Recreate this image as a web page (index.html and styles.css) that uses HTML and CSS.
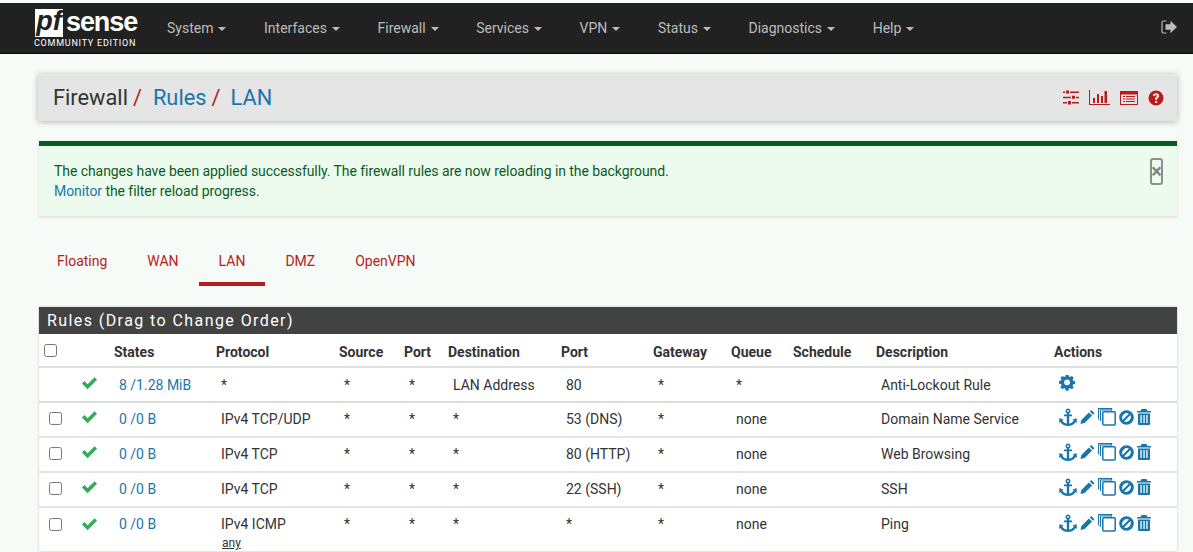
FILE: index.html
```html
<!DOCTYPE html>
<html lang="en">
<head>
<meta charset="utf-8">
<title>Firewall: Rules: LAN</title>
<link rel="stylesheet" href="styles.css">
</head>
<body>
<svg class="defs" width="0" height="0" aria-hidden="true">
  <symbol id="i-check" viewBox="0 0 18 14"><path d="M1 7.500 3.600 5 7 8.300 14.400 1 17 3.600 7 13.500z"/></symbol>
  <symbol id="i-cog" viewBox="0 0 16 16"><path fill-rule="evenodd" d="M6.500 0h3l.4 2.200 1.400.6 1.900-1.300 2.100 2.100-1.300 1.900.6 1.400 2.200.4v3l-2.200.4-.6 1.400 1.300 1.900-2.100 2.100-1.900-1.300-1.400.6-.4 2.200h-3l-.4-2.200-1.400-.6-1.900 1.300L.700 13.700l1.300-1.900-.6-1.400L-.800 10V7l2.200-.4.6-1.400L.700 3.600 2.800 1.500l1.900 1.300 1.400-.6zM8 5.300a3.200 3.200 0 1 0 0 6.400 3.200 3.200 0 0 0 0-6.400z" transform="translate(.7 -.5) scale(.92)"/></symbol>
  <symbol id="i-anchor" viewBox="0 0 18 18"><path fill-rule="evenodd" d="M9 .5a2.500 2.500 0 0 1 1.200 4.700V6.500H13v1.800h-2.800v7.300c2-.3 3.800-1.400 4.600-3l-1.400-.9L17.500 10l.5 5-1.400-.9C15.200 16.600 12.300 18 9 18s-6.200-1.400-7.600-3.900L0 15l.5-5 4.100 1.700-1.400.9c.8 1.600 2.600 2.700 4.600 3V8.300H5V6.500h2.800V5.200A2.500 2.500 0 0 1 9 .5zm0 1.600a.9.900 0 1 0 0 1.800.9.900 0 0 0 0-1.800z"/></symbol>
  <symbol id="i-pencil" viewBox="0 0 16 16"><path d="M12 .6 15.400 4l-1.500 1.500-3.400-3.400zM9.500 3.100l3.400 3.400-8 8L.5 15.500l1-4.400z"/></symbol>
  <symbol id="i-clone" viewBox="0 0 18 18"><path fill="none" stroke="currentColor" stroke-width="1" d="M2.500 13V2h11"/><path fill="none" stroke="currentColor" stroke-width="1.100" d="M.6 11.500V.6h13v2"/><rect x="4.800" y="3.800" width="12.400" height="13.200" rx="1" fill="none" stroke="currentColor" stroke-width="1.500"/></symbol>
  <symbol id="i-ban" viewBox="0 0 16 16"><path fill-rule="evenodd" d="M8 .2a7.800 7.800 0 1 1 0 15.600A7.800 7.800 0 0 1 8 .2zM3.800 10.600 10.600 3.800A5.200 5.200 0 0 0 3.800 10.600zM5.400 12.200a5.200 5.200 0 0 0 6.800-6.800z"/></symbol>
  <symbol id="i-trash" viewBox="0 0 14 16"><path fill-rule="evenodd" d="M4.500 0h5l1 2H14v1.600H0V2h3.500zM1 4.500h12V15a1 1 0 0 1-1 1H2a1 1 0 0 1-1-1zM3.400 6v8h1.300V6zM6.400 6v8h1.300V6zM9.300 6v8h1.300V6z"/></symbol>
  <symbol id="i-sliders" viewBox="0 0 16 15"><path fill-rule="evenodd" d="M0 1.500h2v1.500H0zM3 .5h3v3H3zM7 1.500h9v1.500H7zM0 6.700h8v1.500H0zM9 5.700h3v3H9zM13 6.700h3v1.500h-3zM0 12h4v1.500H0zM5 11h3v3.500H5zM9 12h7v1.500H9z"/></symbol>
  <symbol id="i-chart" viewBox="0 0 21 15"><path d="M0 0h1v14h20v1H0zM4 8h2v5H4zM8 4h2v9H8zM12 6h2v7h-2zM15.500 1h2.500v12h-2.500z"/></symbol>
  <symbol id="i-list" viewBox="0 0 18 14"><path fill-rule="evenodd" d="M0 0h18v14H0zM1 3.500V13h16V3.500zM3 5h2v1H3zM6 5h9v1H6zM3 7.500h2v1H3zM6 7.500h9v1H6zM3 10h2v1H3zM6 10h9v1H6z"/></symbol>
  <symbol id="i-help" viewBox="0 0 16 16"><path fill-rule="evenodd" d="M8 .5a7.500 7.500 0 1 1 0 15 7.500 7.500 0 0 1 0-15zM7 11v2h2.200v-2zM8 3.200c-1.800 0-3 1-3.200 2.600l2 .4c.1-.8.500-1.200 1.100-1.200.6 0 1 .3 1 .8 0 .5-.4.800-1 1.300-.7.500-.9 1.200-.9 2.900h2c0-1 .1-1.300.8-1.800.9-.7 1.400-1.300 1.400-2.400 0-1.600-1.300-2.600-3.200-2.600z"/></symbol>
  <symbol id="i-out" viewBox="0 0 16 14"><path d="M5.500 1H2.500C1.500 1 1 1.600 1 2.500v9c0 .9.500 1.500 1.500 1.500h3" fill="none" stroke="currentColor" stroke-width="1.200"/><path d="M9.500 .8 16 7l-6.500 6.200V9.700H4.500V4.300h5z"/></symbol>
</svg>

<nav class="navbar">
  <a class="brand" href="#">
    <span class="brand-top"><span class="brand-pf">pf</span><span class="brand-sense">sense</span></span>
    <span class="brand-sub">COMMUNITY EDITION</span>
  </a>
  <ul class="menu">
    <li><a href="#">System<i class="caret"></i></a></li>
    <li><a href="#">Interfaces<i class="caret"></i></a></li>
    <li><a href="#">Firewall<i class="caret"></i></a></li>
    <li><a href="#">Services<i class="caret"></i></a></li>
    <li><a href="#">VPN<i class="caret"></i></a></li>
    <li><a href="#">Status<i class="caret"></i></a></li>
    <li><a href="#">Diagnostics<i class="caret"></i></a></li>
    <li><a href="#">Help<i class="caret"></i></a></li>
  </ul>
  <a class="logout" href="#"><svg class="ic-out"><use href="#i-out"/></svg></a>
</nav>

<main class="page">
  <header class="crumbs">
    <h1><span>Firewall</span><em>/</em><a href="#">Rules</a><em>/</em><a href="#">LAN</a></h1>
    <div class="crumb-icons">
      <svg class="ic-sliders"><use href="#i-sliders"/></svg>
      <svg class="ic-chart"><use href="#i-chart"/></svg>
      <svg class="ic-list"><use href="#i-list"/></svg>
      <svg class="ic-help"><use href="#i-help"/></svg>
    </div>
  </header>

  <section class="alert">
    <div class="alert-text">
      <p>The changes have been applied successfully. The firewall rules are now reloading in the background.</p>
      <p><a href="#">Monitor</a> the filter reload progress.</p>
    </div>
    <button class="close" type="button">×</button>
  </section>

  <ul class="tabs">
    <li><a href="#">Floating</a></li>
    <li><a href="#">WAN</a></li>
    <li class="active"><a href="#">LAN</a></li>
    <li><a href="#">DMZ</a></li>
    <li><a href="#">OpenVPN</a></li>
  </ul>

  <section class="panel">
    <h2>Rules (Drag to Change Order)</h2>
    <table class="rules">
      <colgroup>
        <col class="c-box"><col class="c-ok"><col class="c-states"><col class="c-proto"><col class="c-src"><col class="c-sport"><col class="c-dest"><col class="c-port"><col class="c-gw"><col class="c-queue"><col class="c-sched"><col class="c-desc"><col class="c-act">
      </colgroup>
      <thead>
        <tr>
          <th class="head-box"><input type="checkbox"></th><th></th><th>States</th><th>Protocol</th><th>Source</th><th>Port</th><th>Destination</th><th>Port</th><th>Gateway</th><th>Queue</th><th>Schedule</th><th>Description</th><th>Actions</th>
        </tr>
      </thead>
      <tbody>
        <tr class="lockout">
          <td></td><td class="ok"><svg class="ic-check"><use href="#i-check"/></svg></td><td><a href="#">8 /1.28 MiB</a></td><td>*</td><td>*</td><td>*</td><td>LAN Address</td><td>80</td><td>*</td><td>*</td><td></td><td>Anti-Lockout Rule</td>
          <td><div class="acts"><svg class="ic-cog"><use href="#i-cog"/></svg></div></td>
        </tr>
        <tr>
          <td class="box"><input type="checkbox"></td><td class="ok"><svg class="ic-check"><use href="#i-check"/></svg></td><td><a href="#">0 /0 B</a></td><td>IPv4 TCP/UDP</td><td>*</td><td>*</td><td>*</td><td>53 (DNS)</td><td>*</td><td>none</td><td></td><td>Domain Name Service</td>
          <td><div class="acts"><svg class="ic-anchor"><use href="#i-anchor"/></svg><svg class="ic-pencil"><use href="#i-pencil"/></svg><svg class="ic-clone"><use href="#i-clone"/></svg><svg class="ic-ban"><use href="#i-ban"/></svg><svg class="ic-trash"><use href="#i-trash"/></svg></div></td>
        </tr>
        <tr>
          <td class="box"><input type="checkbox"></td><td class="ok"><svg class="ic-check"><use href="#i-check"/></svg></td><td><a href="#">0 /0 B</a></td><td>IPv4 TCP</td><td>*</td><td>*</td><td>*</td><td>80 (HTTP)</td><td>*</td><td>none</td><td></td><td>Web Browsing</td>
          <td><div class="acts"><svg class="ic-anchor"><use href="#i-anchor"/></svg><svg class="ic-pencil"><use href="#i-pencil"/></svg><svg class="ic-clone"><use href="#i-clone"/></svg><svg class="ic-ban"><use href="#i-ban"/></svg><svg class="ic-trash"><use href="#i-trash"/></svg></div></td>
        </tr>
        <tr>
          <td class="box"><input type="checkbox"></td><td class="ok"><svg class="ic-check"><use href="#i-check"/></svg></td><td><a href="#">0 /0 B</a></td><td>IPv4 TCP</td><td>*</td><td>*</td><td>*</td><td>22 (SSH)</td><td>*</td><td>none</td><td></td><td>SSH</td>
          <td><div class="acts"><svg class="ic-anchor"><use href="#i-anchor"/></svg><svg class="ic-pencil"><use href="#i-pencil"/></svg><svg class="ic-clone"><use href="#i-clone"/></svg><svg class="ic-ban"><use href="#i-ban"/></svg><svg class="ic-trash"><use href="#i-trash"/></svg></div></td>
        </tr>
        <tr class="last">
          <td class="box"><input type="checkbox"></td><td class="ok"><svg class="ic-check"><use href="#i-check"/></svg></td><td><a href="#">0 /0 B</a></td><td>IPv4 ICMP<span class="sub">any</span></td><td>*</td><td>*</td><td>*</td><td>*</td><td>*</td><td>none</td><td></td><td>Ping</td>
          <td><div class="acts"><svg class="ic-anchor"><use href="#i-anchor"/></svg><svg class="ic-pencil"><use href="#i-pencil"/></svg><svg class="ic-clone"><use href="#i-clone"/></svg><svg class="ic-ban"><use href="#i-ban"/></svg><svg class="ic-trash"><use href="#i-trash"/></svg></div></td>
        </tr>
      </tbody>
    </table>
  </section>
</main>
</body>
</html>
```
FILE: styles.css
```css
* { box-sizing: border-box; }
html, body { height: 552px; overflow: hidden; }
body {
  margin: 0;
  padding-top: 3px;
  background: #f6fbf8;
  font-family: Roboto, "Liberation Sans", sans-serif;
  font-size: 14px;
  color: #212121;
}
a { text-decoration: none; }
ul { list-style: none; margin: 0; padding: 0; }
.defs { position: absolute; }
svg { fill: currentColor; display: block; flex: none; }

.navbar {
  height: 51px;
  background: #212121;
  border-bottom: 1px solid #0b0b0b;
  display: flex;
  align-items: center;
  padding-left: 34px;
  padding-right: 16px;
}
.brand { display: flex; flex-direction: column; width: 114px; color: #fff; margin-top: 1px; }
.brand-top { display: flex; align-items: center; height: 28px; margin-left: 1px; }
.brand-pf {
  width: 28px; height: 28px;
  background: #fff; color: #212121;
  font: italic 700 27px/25px "Liberation Sans", sans-serif;
  text-align: center;
}
.brand-sense { font: 700 27px/28px "Liberation Sans", sans-serif; margin-left: 3px; letter-spacing: -1.1px; margin-top: -1px; }
.brand-sub { font: 400 9px/11px Roboto, sans-serif; letter-spacing: .76px; white-space: nowrap; margin-top: 1px; }
.menu { display: flex; flex: 1; padding-left: .2px; }
.menu a { display: flex; align-items: center; padding: 0 18.800px; color: #bdbdbd; font-size: 14px; white-space: nowrap; }
.caret { width: 0; height: 0; margin-left: 5px; margin-top: 2px; border-left: 4px solid transparent; border-right: 4px solid transparent; border-top: 4px solid #bdbdbd; }
.logout { color: #bdbdbd; margin-top: -3px; }
.ic-out { width: 16px; height: 14px; }

.page { padding: 20px 16px 0 38px; }
.crumbs {
  height: 47px;
  width: 1139px;
  background: #e5e5e5;
  box-shadow: 0 1px 6px rgba(0,0,0,.28);
  display: flex;
  align-items: center;
  justify-content: space-between;
  padding: 0 13px 0 15px;
}
.crumbs h1 { margin: 0; font-size: 21.800px; font-weight: 400; display: flex; align-items: baseline; color: #333; }
.crumbs h1 em { font-style: normal; color: #b71c1c; margin: 0 11px 0 5px; }
.crumbs h1 a { color: #1976ab; }
.crumbs h1 a + em { margin: 0 10px 0 5px; }
.crumb-icons { display: flex; align-items: center; color: #b71c1c; gap: 10px; }
.ic-sliders { width: 16px; height: 15px; }
.ic-chart { width: 21px; height: 15px; }
.ic-list { width: 18px; height: 14px; }
.ic-help { width: 16px; height: 16px; }

.alert {
  margin-top: 20px;
  margin-left: 1px;
  width: 1138px;
  height: 75px;
  background: #edfbee;
  border-top: 5px solid #00601f;
  box-shadow: 0 1px 3px rgba(0,0,0,.15);
  color: #0b5a24;
  display: flex;
  justify-content: space-between;
  padding: 15px 14px 0 15px;
  font-size: 14px;
  letter-spacing: -.07px;
}
.alert p { margin: 0; line-height: 20px; }
.alert a { color: #1976ab; }
.close {
  width: 13px; height: 27px;
  margin-top: -3px;
  padding: 0;
  background: transparent;
  border: 2px solid #8a918c;
  border-radius: 3px;
  color: #7d847f;
  font: 700 20px/22px Roboto, sans-serif;
  text-align: center;
  display: flex;
  justify-content: center;
}

.tabs { display: flex; margin-top: 25px; height: 45px; margin-left: -1px; }
.tabs li { padding: 0 20px; }
.tabs a { color: #b71c1c; font-size: 14px; line-height: 40px; display: block; }
.tabs .active { border-bottom: 4px solid #b71c1c; }

.panel {
  margin-top: 21px;
  margin-left: 1px;
  width: 1138px;
  background: #fff;
  box-shadow: 0 0 2px rgba(0,0,0,.25);
}
.panel h2 {
  margin: 0;
  height: 27px;
  background: #424242;
  color: #fff;
  font-size: 16px;
  font-weight: 400;
  line-height: 28px;
  letter-spacing: 1.420px;
  padding-left: 8px;
}
.rules { width: 1138px; table-layout: fixed; border-collapse: collapse; }
.c-box { width: 38px; } .c-ok { width: 32px; } .c-states { width: 102px; } .c-proto { width: 123px; }
.c-src { width: 65px; } .c-sport { width: 44px; } .c-dest { width: 113px; } .c-port { width: 92px; }
.c-gw { width: 78px; } .c-queue { width: 62px; } .c-sched { width: 83px; } .c-desc { width: 178px; } .c-act { width: 128px; }
.rules th {
  height: 33px;
  padding: 4px 0 0 5px;
  text-align: left;
  font-size: 14px;
  font-weight: 700;
  color: #333;
  border-bottom: 2px solid #dde2e0;
  white-space: nowrap;
}
.rules td {
  height: 35px;
  padding: 0 0 2px 10px;
  font-size: 14px;
  color: #333;
  border-bottom: 2px solid #e3e6e4;
  vertical-align: middle;
  white-space: nowrap;
}
.rules td a { color: #1976ab; }
.rules .lockout td { border-bottom-color: #d8dcda; padding-bottom: 0; }
.rules input { width: 13px; height: 13px; margin: 0; display: block; }
.rules th.head-box input { margin-top: -4px; }
.rules td.ok { padding-left: 4px; color: #2fae57; }
.ic-check { width: 17px; height: 14px; margin-top: -3px; }
.acts { display: flex; align-items: center; color: #1976ab; margin-top: -3px; gap: 3px; }
.ic-cog { width: 16px; height: 16px; }
.ic-anchor { width: 18px; height: 18px; }
.ic-pencil { width: 15px; height: 16px; }
.ic-clone { width: 18px; height: 18px; }
.ic-ban { width: 15px; height: 15px; }
.ic-trash { width: 14px; height: 16px; }

.rules .last td { vertical-align: top; padding-top: 8px; padding-bottom: 0; border-bottom: 0; height: 44px; }
.rules .last td.box { padding-top: 10px; }
.rules .last td.ok { padding-top: 12px; }
.rules .last .acts { margin-top: -2px; }
.sub { display: block; font-size: 12px; line-height: 14px; text-decoration: underline; margin-top: 4px; margin-left: 1px; }
```
